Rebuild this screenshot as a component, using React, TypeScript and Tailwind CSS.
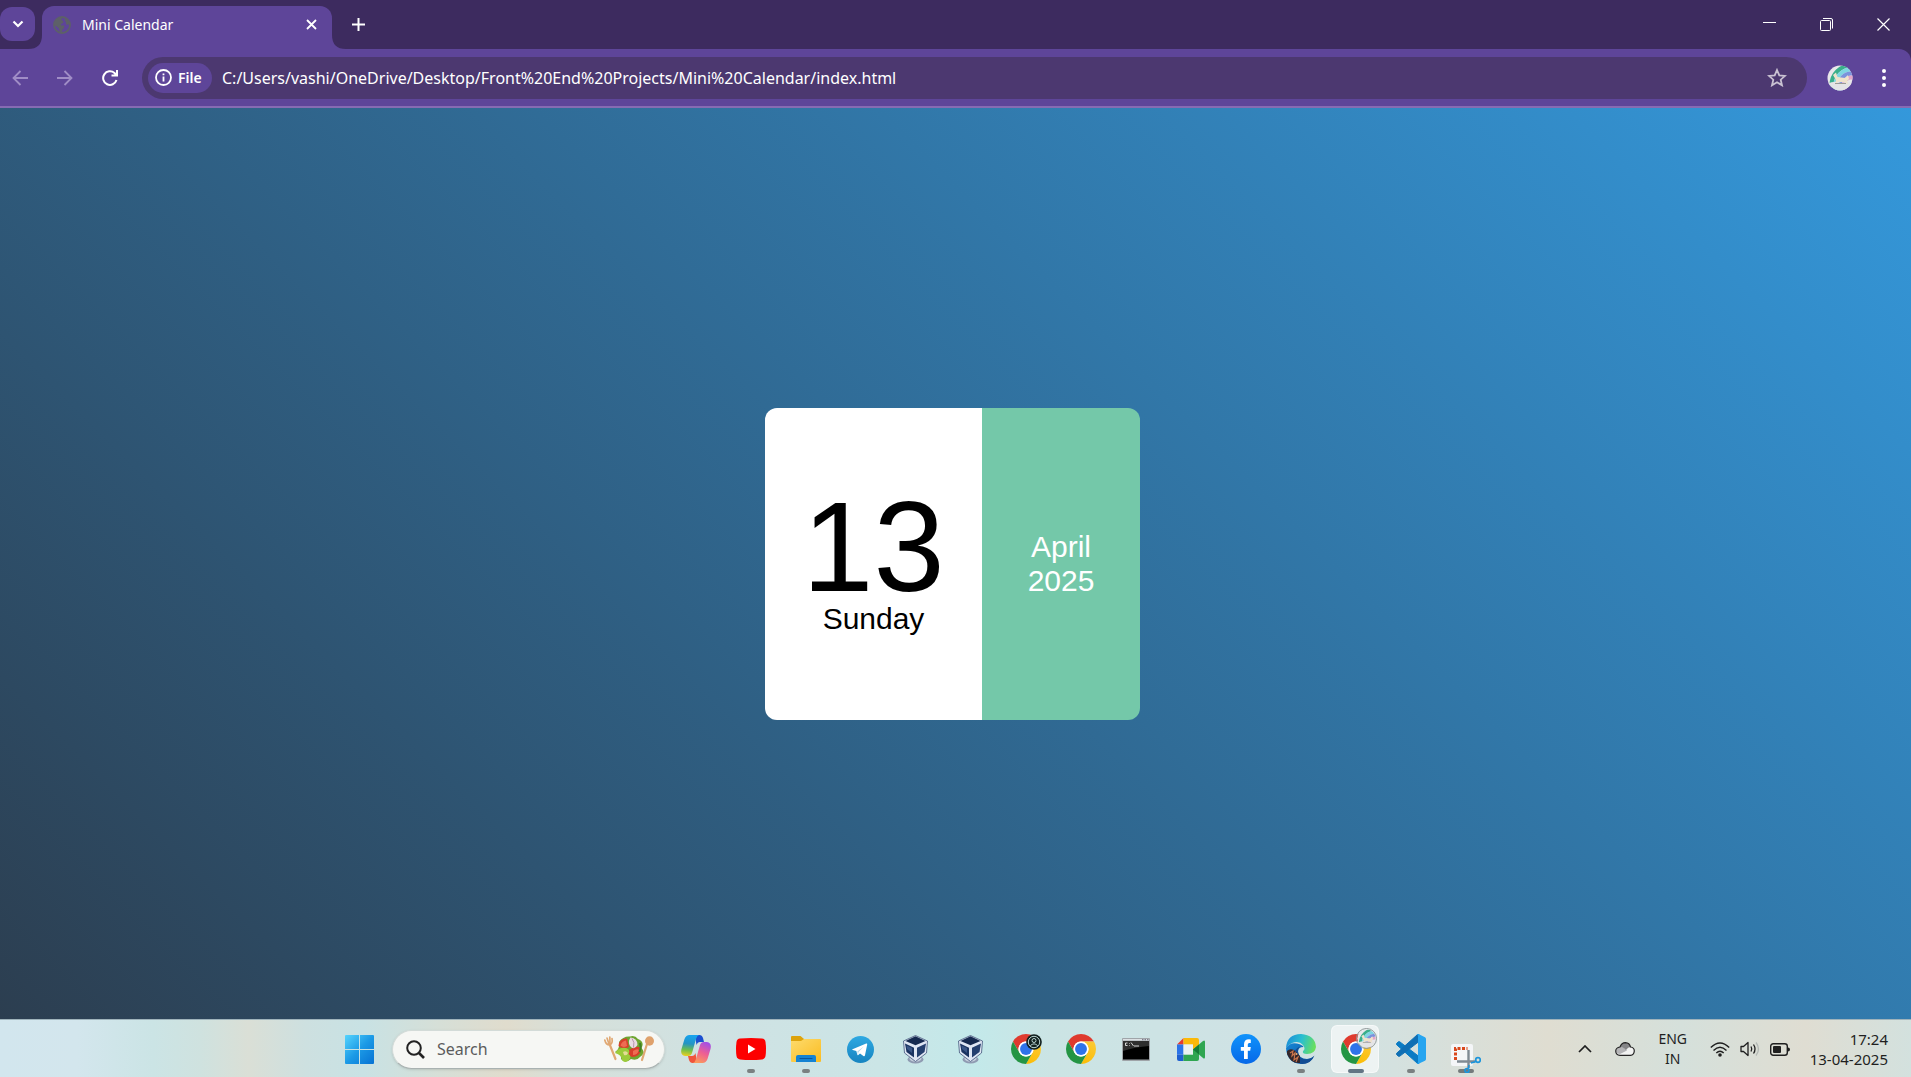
import type { ReactNode } from "react";

function Chrome({ id }: { id: string }) {
  const seg = "M4.95 13A22 22 0 0 1 43.05 13H24A11 11 0 0 0 14.47 29.5Z";
  return (
    <svg viewBox="2 2 44 44" className="size-[30px]" aria-hidden="true">
      <defs>
        <linearGradient id={`${id}-y`} x1="0" y1="0" x2="1" y2="0">
          <stop offset="0" stopColor="#fcc934" />
          <stop offset="1" stopColor="#fbbc04" />
        </linearGradient>
      </defs>
      <circle cx="24" cy="24" r="12" fill="#fff" />
      <path d={seg} fill="#df3a2e" />
      <path d={seg} fill={`url(#${id}-y)`} transform="rotate(120 24 24)" />
      <path d={seg} fill="#249544" transform="rotate(240 24 24)" />
      <circle cx="24" cy="24" r="11" fill="#fff" />
      <circle cx="24" cy="24" r="8.7" fill="#2f73ea" />
    </svg>
  );
}

function WindowsLogo() {
  return (
    <svg viewBox="0 0 29 29" className="size-[29px]" aria-hidden="true">
      <defs>
        <linearGradient id="win" gradientUnits="userSpaceOnUse" x1="0" y1="0" x2="29" y2="29">
          <stop offset="0" stopColor="#55d4fd" />
          <stop offset="0.5" stopColor="#1c9ae6" />
          <stop offset="1" stopColor="#0672d3" />
        </linearGradient>
      </defs>
      <path fill="url(#win)" d="M1 0h13v14H0V1a1 1 0 0 1 1-1ZM15 0h13a1 1 0 0 1 1 1v13H15ZM0 15h14v14H1a1 1 0 0 1-1-1ZM15 15h14v13a1 1 0 0 1-1 1H15Z" />
    </svg>
  );
}

function Salad() {
  return (
    <svg viewBox="0 0 52 28" className="h-7 w-[52px]" aria-hidden="true">
      <g stroke="#e0a873" strokeLinecap="round" fill="none">
        <path d="M6.500 9L12.500 24" strokeWidth="2.200" />
        <path d="M1.800 5Q3 10 6.500 10Q10 9 9 3.500M4 3L6 9M6.800 2L7 8" strokeWidth="1.700" />
        <path d="M44 9L39 25" strokeWidth="2.200" />
      </g>
      <ellipse cx="46.500" cy="6" rx="4.500" ry="4.700" fill="#dfa16c" />
      <path d="M16 7Q20 1 27 1.500Q32 0 35 4Q42 7 38.500 13Q43 18 37 22Q34 26 28 24Q22 29 18 24Q19 19 12 17Q17 14 16 7Z" fill="#6da52f" />
      <path d="M15.500 11Q16 3 24 3.500L26 12Q20 15 15.500 11Z" fill="#d8402c" />
      <path d="M26 15Q36 9 38 14Q37 22 29 22Q23 20 26 15Z" fill="#d73d2b" />
      <path d="M17.500 10.500Q19 6 23 5.500L24 11Q20 13 17.500 10.500ZM30 16Q35 13 36 15.500Q34 20 30 20Z" fill="#ee6d52" />
      <path d="M27.500 2.500Q34.500 3 34.500 10Q31 16 27 11Q24.500 7 27.500 2.500Z" fill="#eadbe2" />
      <path d="M29 3.500Q32 7 30.500 12.500" stroke="#a9829c" strokeWidth=".8" fill="none" />
      <path d="M12 18Q16 12 23 13Q28 15 25.500 19Q29 21 26 25Q22 29 19 25Q19 20 12 18Z" fill="#9ccb3b" />
      <path d="M20 17Q23 15 25 18Q24 21 21 20Z" fill="#e4dc96" />
      <path d="M37 8Q38.500 13 36.500 17" stroke="#3f7f25" strokeWidth="2" fill="none" />
    </svg>
  );
}

function Copilot() {
  return (
    <svg viewBox="0 0 30 28" className="h-7 w-[30px]" aria-hidden="true">
      <defs>
        <linearGradient id="cp-a" x1="0.300" y1="0" x2="0.200" y2="1">
          <stop offset="0" stopColor="#16a3ee" />
          <stop offset="0.400" stopColor="#2494c4" />
          <stop offset="0.700" stopColor="#6fbf4b" />
          <stop offset="1" stopColor="#f0cf20" />
        </linearGradient>
        <linearGradient id="cp-b" x1="0.700" y1="0" x2="0.300" y2="1">
          <stop offset="0" stopColor="#a34fe6" />
          <stop offset="0.500" stopColor="#ee5f93" />
          <stop offset="1" stopColor="#fb9a5c" />
        </linearGradient>
      </defs>
      <path d="M14 0H18.500Q21 0 22 3L23 7H19Q16.500 7 15.500 10Z" fill="#1b4fd0" />
      <path d="M16 28H11.500Q9 28 8 25L7 21H11Q13.500 21 14.500 18Z" fill="#f0553c" />
      <path d="M8.500 0H18Q16 .5 15 4L11 18Q10 21 7 21H4Q-1 20 .5 14L3.500 4Q5 0 8.500 0Z" fill="url(#cp-a)" />
      <path d="M21.500 28H12Q14 27.500 15 24L19 10Q20 7 23 7H26Q31 8 29.500 14L26.500 24Q25 28 21.500 28Z" fill="url(#cp-b)" />
    </svg>
  );
}

function YouTube() {
  return (
    <svg viewBox="0 0 30 22" className="h-[22px] w-[30px]" aria-hidden="true">
      <path d="M4 .6Q15-.6 26 .6Q29 1 29.500 4Q30.500 11 29.500 18Q29 21 26 21.400Q15 22.600 4 21.400Q1 21 .5 18Q-.5 11 .5 4Q1 1 4 .6Z" fill="#fd0000" />
      <path d="M12 6.500L19.500 11L12 15.500Z" fill="#fff" />
    </svg>
  );
}

function Folder() {
  return (
    <svg viewBox="0 0 30 26" className="h-[26px] w-[30px]" aria-hidden="true">
      <defs>
        <linearGradient id="fold" x1="0" y1="0" x2="1" y2="1">
          <stop offset="0" stopColor="#fddb6d" />
          <stop offset="1" stopColor="#fbbc21" />
        </linearGradient>
      </defs>
      <path d="M0 1Q0 0 1 0H9.500L13 3V5H0Z" fill="#dda30c" />
      <path d="M0 5H10L13 3H29Q30 3 30 4V25Q30 26 29 26H1Q0 26 0 25Z" fill="url(#fold)" />
      <path d="M5 26V21Q5 19 7 19H23Q25 19 25 21V26Z" fill="#1583d3" />
      <path d="M9 22.500H21" stroke="#0b569e" strokeWidth="1.200" strokeLinecap="round" />
    </svg>
  );
}

function Telegram() {
  return (
    <svg viewBox="0 0 27 27" className="size-[27px]" aria-hidden="true">
      <defs>
        <linearGradient id="tg" x1="0" y1="0" x2="0" y2="1">
          <stop offset="0" stopColor="#2fa9e2" />
          <stop offset="1" stopColor="#1784c0" />
        </linearGradient>
      </defs>
      <circle cx="13.500" cy="13.500" r="13.500" fill="url(#tg)" />
      <path d="M5.500 13.200L19.200 7.600Q20.400 7.300 20.200 8.600L18 19.300Q17.600 20.600 16.400 19.900L13 17.400L11.300 19.100Q10.500 19.700 10.300 18.600L9.300 15L5.700 14.100Q4.700 13.700 5.500 13.200Z" fill="#fff" />
      <path d="M10.300 15.400L17 10.300L11.600 16.100L10.900 18.800Z" fill="#b5d8ea" />
    </svg>
  );
}

function VirtualBox() {
  return (
    <svg viewBox="0 0 25 29" className="h-[29px] w-[25px]" aria-hidden="true">
      <ellipse cx="12.500" cy="24.500" rx="8" ry="4" fill="#8f9bb2" />
      <ellipse cx="12.500" cy="23.500" rx="6" ry="3.200" fill="#c5cfdd" />
      <path d="M12.500 .5L24.500 6L23.500 18L12.500 26.500L1.500 18L.5 6Z" fill="#dfe6f3" stroke="#44577c" strokeWidth=".8" />
      <path d="M12.500 1.300L22.500 6L12.500 10.300L2.500 6Z" fill="#15294f" />
      <path d="M2 8.500L11 12.700V22.500L3.500 17Z" fill="#1a3360" />
      <path d="M23 8.500L14 12.700V22.500L21.500 17Z" fill="#243f6e" />
      <path d="M3.500 10.500L9 13V18L4 14Z" fill="#3a5687" />
    </svg>
  );
}

function Terminal() {
  return (
    <svg viewBox="0 0 28 23" className="h-[23px] w-7" aria-hidden="true">
      <rect width="28" height="23" rx="1" fill="#9fa4a8" />
      <rect x="1" y="1" width="26" height="1.500" fill="#dce0e3" />
      <path d="M20 1.700h1.500m1 0h1.500m1 0h1.500" stroke="#667" strokeWidth="1" />
      <rect x="1" y="3" width="26" height="18.500" fill="#000" />
      <path d="M1 3H27V8Q13 9 1 13Z" fill="#2e2e2e" />
      <path d="M5.500 5H3.500V7.500H5.500M7.500 5v.6M7.500 7v.6M9 4.500L11.500 8M12 8H17" stroke="#e8e8e8" strokeWidth=".9" fill="none" />
    </svg>
  );
}

function Meet() {
  return (
    <svg viewBox="0 0 28 23" className="h-[23px] w-7" aria-hidden="true">
      <path d="M0 6.500L6.500 0V6.500Z" fill="#e5392f" />
      <path d="M0 6.500H6.500V16.500H0Z" fill="#2b73e8" />
      <path d="M0 16.500H6.500V23H2Q0 23 0 21Z" fill="#1d5fd0" />
      <path d="M6.500 0H20Q22 0 22 2V9L16 12V6.500H6.500Z" fill="#fbb908" />
      <path d="M6.500 16.500H16V11.500L22 8V21Q22 23 20 23H6.500Z" fill="#2fa651" />
      <path d="M6.500 6.500H16V16.500H6.500Z" fill="#eaf1f1" />
      <path d="M16 11.500L26 3Q28 1.500 28 4V19Q28 21.500 26 20Z" fill="#2fa651" />
      <path d="M16 11.500L22 6.500V16.500Z" fill="#157a38" />
    </svg>
  );
}

function Facebook() {
  return (
    <svg viewBox="0 0 30 30" className="size-[30px]" aria-hidden="true">
      <defs>
        <linearGradient id="fb" x1="0" y1="0" x2="0" y2="1">
          <stop offset="0" stopColor="#1093fb" />
          <stop offset="1" stopColor="#0668e8" />
        </linearGradient>
      </defs>
      <circle cx="15" cy="15" r="15" fill="url(#fb)" />
      <path d="M13 25V16.800H9.800V12.900H13V10.500Q13 5.300 18 5.300Q19 5.300 19.800 5.500V8.900H18.300Q16.800 8.900 16.800 10.600V12.900H19.800L19.200 16.800H16.800V25Z" fill="#fff" />
    </svg>
  );
}

function Edge() {
  return (
    <svg viewBox="0 0 30 30" className="size-[30px]" aria-hidden="true">
      <defs>
        <linearGradient id="ed-a" x1="0" y1="0.300" x2="1" y2="0.500">
          <stop offset="0" stopColor="#1c8fd8" />
          <stop offset="0.500" stopColor="#29bfd0" />
          <stop offset="1" stopColor="#6be05a" />
        </linearGradient>
        <linearGradient id="ed-b" x1="0" y1="0" x2="1" y2="1">
          <stop offset="0" stopColor="#1687d6" />
          <stop offset="1" stopColor="#0b4f9e" />
        </linearGradient>
      </defs>
      <path d="M0 14Q1 0 15 0Q29 1 30 13Q29 20 21 20Q16 20 17 17Q20 15 17 11Q13 6 6 9Q2 11 0 14Z" fill="url(#ed-a)" />
      <path d="M0 14Q4 8 11 9.500Q17 11 17.500 13Q12 13 12 18Q13 25 21 25Q25 25 28 22Q24 30 15 30Q1 29 0 14Z" fill="url(#ed-b)" />
      <path d="M12 17Q12 25 20 25.500Q25 25.500 28.500 21.500Q25 30 16 30Q8 28 8 21Q8 15 14 12.500Q12 14.500 12 17Z" fill="#134d94" />
      <path d="M1 17Q4 14 8 16L14 22V29Q5 30 1 20Z" fill="#33272b" />
      <path d="M4 19L7 17L6 22L9 19L8 26L12 23L10 28" stroke="#c9744b" strokeWidth="1.200" fill="none" />
      <circle cx="10.500" cy="20" r="1" fill="#e6b07c" />
    </svg>
  );
}

function VSCode() {
  return (
    <svg viewBox="0 0 30 30" className="size-[30px]" aria-hidden="true">
      <path d="M.7 9.300L2.200 7.900Q3 7.300 3.900 7.900L23 22.500V29.300Q22 29.800 21 29L.7 10.800Q0 10 .7 9.300Z" fill="#0a7bc4" stroke="#0a7bc4" />
      <path d="M.7 20.700L2.200 22.100Q3 22.700 3.900 22.100L23 7.500V.7Q22 .2 21 1L.7 19.200Q0 20 .7 20.700Z" fill="#0f6fb4" stroke="#0f6fb4" />
      <path d="M22 30Q21 30 20.500 29Q22 29.500 22 28V2Q22 .5 20.500 1Q21 0 22.500 0L29 3.300Q30 3.800 30 5V25Q30 26.200 29 26.700Z" fill="#27a5f0" />
    </svg>
  );
}

function SnippingTool() {
  return (
    <svg viewBox="0 0 30 30" className="size-[30px]" aria-hidden="true">
      <rect x="0" y="1" width="22" height="22" rx="2" fill="#f4f6f8" />
      <path d="M4.500 17V5.500H16.500" stroke="#d9481c" strokeWidth="3" strokeDasharray="3 1.500" fill="none" />
      <path d="M17.500 7V25M6 18.500H24" stroke="#7f8a93" strokeWidth="2.400" />
      <circle cx="27" cy="17" r="2.300" stroke="#1c95dc" strokeWidth="1.700" fill="none" />
      <circle cx="16" cy="27.500" r="2" stroke="#1c95dc" strokeWidth="1.700" fill="none" />
      <path d="M20 20L25 18.500M18 22L17.500 25.500" stroke="#1c95dc" strokeWidth="1.500" />
    </svg>
  );
}

function Avatar({ className, id }: { className: string; id: string }) {
  return (
    <svg viewBox="0 0 26 26" className={className} aria-hidden="true">
      <clipPath id={id}>
        <circle cx="13" cy="13" r="12.500" />
      </clipPath>
      <g clipPath={`url(#${id})`}>
        <rect width="26" height="26" fill="#e9e7ea" />
        <g fill="none" strokeWidth="4">
          <circle cx="24" cy="20" r="19.500" stroke="#3aaf8b" />
          <circle cx="24" cy="20" r="15.500" stroke="#7fd6e2" />
          <circle cx="24" cy="20" r="11.500" stroke="#7b93dc" />
          <circle cx="24" cy="20" r="7.500" stroke="#e3a5c8" />
        </g>
        <path d="M0 19Q8 15 14 18Q22 16 26 18V26H0Z" fill="#e4e4e6" />
        <path d="M6 10L9 7.500L10.500 12L18 13L21 10L22 14L20 16L21 19L17 17L11 17L8 20L9 15Z" fill="#efe3cb" />
        <path d="M8 18.500H19" stroke="#9b9b98" strokeWidth="1" />
      </g>
    </svg>
  );
}

function TaskButton({ label, children, mark, active }: { label: string; children: ReactNode; mark?: "short" | "wide"; active?: boolean }) {
  return (
    <button type="button" aria-label={label} className="relative flex h-12 w-[55px] items-center justify-center">
      {active && <span className="absolute inset-y-0 left-[3px] w-12 rounded-md border border-white/50 bg-white/60" />}
      <span className="relative">{children}</span>
      {mark === "short" && <span className="absolute bottom-0 h-1 w-2 rounded-full bg-[#7a8081]" />}
      {mark === "wide" && <span className="absolute bottom-0 h-1 w-4 rounded-full bg-[#627584]" />}
    </button>
  );
}

function TitleBar() {
  return (
    <header className="flex h-[49px] items-start bg-[#3d2b5f] text-white">
      <button type="button" aria-label="Search tabs" className="mt-[7px] flex h-[34px] w-[35px] items-center justify-center rounded-xl bg-[#5e4599]">
        <svg viewBox="0 0 12 8" className="h-2 w-3" fill="none" stroke="currentColor" strokeWidth="2.200" aria-hidden="true">
          <path d="M1.500 1.500L6 6L10.500 1.500" />
        </svg>
      </button>
      <div className="relative mt-[6px] ml-[7px] flex h-[43px] w-[290px] items-center rounded-t-xl bg-[#5e4599] pr-[15px] pb-[6px] pl-[11px]">
        <svg viewBox="0 0 14 14" className="absolute bottom-0 -left-[14px] size-[14px]" aria-hidden="true">
          <path d="M14 0V14H0Q14 14 14 0Z" fill="#5e4599" />
        </svg>
        <svg viewBox="0 0 14 14" className="absolute -right-[14px] bottom-0 size-[14px]" aria-hidden="true">
          <path d="M0 0V14H14Q0 14 0 0Z" fill="#5e4599" />
        </svg>
        <svg viewBox="0 0 18 18" className="size-[18px]" aria-hidden="true">
          <circle cx="9" cy="9" r="8" fill="none" stroke="#5d6068" strokeWidth="1.800" />
          <path d="M2 5Q5 0 10 1.500Q7.500 3 9 4.500Q11 5 10 7Q7 8 8 9.500H11Q12 11 10.500 12.500Q9 13 9 16.500Q6 16 6 13Q5.500 11 1.500 9.500ZM12 2Q15.500 4 16.500 8Q14 9.500 13 8Q13.500 6 12 5Z" fill="#5d6068" />
        </svg>
        <span className="ml-[11px] flex-1 text-[14px] leading-5">Mini Calendar</span>
        <button type="button" aria-label="Close tab" className="flex size-[11px] items-center justify-center">
          <svg viewBox="0 0 11 11" className="size-[11px]" stroke="currentColor" strokeWidth="1.800" aria-hidden="true">
            <path d="M1 1L10 10M10 1L1 10" />
          </svg>
        </button>
      </div>
      <button type="button" aria-label="New tab" className="ml-[12px] flex h-12 w-7 items-center justify-center">
        <svg viewBox="0 0 13 13" className="size-[13px]" stroke="currentColor" strokeWidth="2" aria-hidden="true">
          <path d="M6.500 0V13M0 6.500H13" />
        </svg>
      </button>
      <div className="ml-auto flex h-12 items-center">
        <button type="button" aria-label="Minimize" className="flex h-12 w-14 items-center justify-center">
          <svg viewBox="0 0 13 13" className="size-[13px]" stroke="currentColor" aria-hidden="true">
            <path d="M0 4.500H13" />
          </svg>
        </button>
        <button type="button" aria-label="Restore" className="flex h-12 w-[58px] items-center justify-center">
          <svg viewBox="0 0 13 13" className="size-[13px]" fill="none" stroke="currentColor" aria-hidden="true">
            <rect x=".5" y="2.500" width="10" height="10" rx="1" />
            <path d="M3 .5H11Q12.500 .5 12.500 2V10.500" />
          </svg>
        </button>
        <button type="button" aria-label="Close" className="flex h-12 w-14 items-center justify-center">
          <svg viewBox="0 0 13 13" className="size-[13px]" stroke="currentColor" strokeWidth="1.200" aria-hidden="true">
            <path d="M.5 .5L12.500 12.500M12.500 .5L.5 12.500" />
          </svg>
        </button>
      </div>
    </header>
  );
}

function Toolbar() {
  return (
    <div className="bg-[#3d2b5f]">
      <div className="flex h-[59px] items-center rounded-tr-xl border-b-2 border-[#866bb3] bg-[#5e4599] text-white">
        <div className="flex gap-[5px]">
          <button type="button" aria-label="Back" className="flex h-8 w-10 items-center justify-center text-[#a08dc6]">
            <svg viewBox="0 0 16 16" className="size-4" fill="none" stroke="currentColor" strokeWidth="1.800" aria-hidden="true">
              <path d="M16 8H1.500M8.500 1L1.500 8L8.500 15" />
            </svg>
          </button>
          <button type="button" aria-label="Forward" className="flex h-8 w-10 items-center justify-center text-[#a08dc6]">
            <svg viewBox="0 0 16 16" className="size-4" fill="none" stroke="currentColor" strokeWidth="1.800" aria-hidden="true">
              <path d="M0 8H14.500M7.500 1L14.500 8L7.500 15" />
            </svg>
          </button>
          <button type="button" aria-label="Reload" className="flex h-8 w-10 items-center justify-center">
            <svg viewBox="0 0 16 16" className="size-4" fill="none" stroke="currentColor" strokeWidth="2" aria-hidden="true">
              <path d="M14.500 10A6.800 6.800 0 1 1 12.500 3L14.500 5M15 0V5.500H9.500" />
            </svg>
          </button>
        </div>
        <div className="ml-3 flex h-[42px] flex-1 items-center rounded-full bg-[#4c3870] pr-[20px] pl-[6px]">
          <button type="button" className="flex h-[30px] w-16 items-center gap-[6px] rounded-full bg-[#5e4599] pl-[7px]">
            <svg viewBox="0 0 17 17" className="size-[17px]" fill="none" stroke="currentColor" strokeWidth="1.800" aria-hidden="true">
              <circle cx="8.500" cy="8.500" r="7.500" />
              <path d="M8.500 7.500V12.500M8.500 4.500V6.300" />
            </svg>
            <span className="text-[14px] font-semibold">File</span>
          </button>
          <input
            type="text"
            aria-label="Address"
            defaultValue="C:/Users/vashi/OneDrive/Desktop/Front%20End%20Projects/Mini%20Calendar/index.html"
            className="ml-[10px] min-w-0 flex-1 bg-transparent pt-px text-[16px] outline-none"
          />
          <button type="button" aria-label="Bookmark this tab" className="text-[#c9c2d2]">
            <svg viewBox="0 0 20 19" className="h-[19px] w-5" fill="none" stroke="currentColor" strokeWidth="1.800" aria-hidden="true">
              <path d="M10 2L12.300 7.400L18 7.900L13.700 11.700L15 17.300L10 14.300L5 17.300L6.300 11.700L2 7.900L7.700 7.400Z" />
            </svg>
          </button>
        </div>
        <button type="button" aria-label="Profile" className="ml-5">
          <Avatar id="profile" className="size-[26px]" />
        </button>
        <button type="button" aria-label="Menu" className="mr-[18px] ml-[22px] flex w-[18px] justify-center">
          <svg viewBox="0 0 4 18" className="h-[18px] w-1" fill="currentColor" aria-hidden="true">
            <circle cx="2" cy="2" r="2" />
            <circle cx="2" cy="9" r="2" />
            <circle cx="2" cy="16" r="2" />
          </svg>
        </button>
      </div>
    </div>
  );
}

function Calendar() {
  return (
    <main className="flex flex-1 items-center justify-center bg-[linear-gradient(45deg,#2c3e50,#3498db)] pr-[6px] font-['Liberation_Sans',Arial,sans-serif]">
      <section className="flex h-[312px] overflow-hidden rounded-xl text-[30px] leading-[34px]">
        <div className="flex w-[217px] flex-col items-center justify-center bg-white text-black">
          <p className="text-[128px] leading-[110px]">13</p>
          <p>Sunday</p>
        </div>
        <div className="flex w-[158px] flex-col items-center justify-center bg-[#74c8a9] text-white">
          <p>April</p>
          <p>2025</p>
        </div>
      </section>
    </main>
  );
}

function Taskbar() {
  return (
    <footer className="flex h-[58px] items-center border-t border-[#9fb3bb] bg-[linear-gradient(90deg,#d2e6ee_0%,#d3e6ed_4%,#cbe4e5_8%,#cfe2df_10.500%,#dadfd6_13%,#cde0e0_16%,#c8e2e4_19%,#d6dfd7_23%,#e0dccd_26.500%,#d6e0da_30%,#cfe2e3_38%,#cbe5e6_46%,#c3e9ea_51%,#cbe4e4_55%,#cfe2e4_66%,#d4e1df_73%,#dfddd1_81%,#d5e0db_88%,#dfddd2_94.500%,#d3e1de_100%)] pt-px text-[#1f1f1f]">
      <nav aria-label="Taskbar" className="ml-[332px] flex items-center">
        <TaskButton label="Start"><WindowsLogo /></TaskButton>
        <label className="mr-[3px] ml-[5px] flex h-[39px] w-[273px] items-center rounded-full border border-b-[#a9b2b1] border-[#d3dbd8] bg-[#f6f7f4] pr-[9px] pl-[13px] shadow-sm">
          <svg viewBox="0 0 19 19" className="size-[19px] shrink-0" fill="none" stroke="#222" strokeWidth="2" aria-hidden="true">
            <circle cx="8" cy="8" r="6.800" />
            <path d="M13 13L18 18" strokeWidth="2.600" />
          </svg>
          <input type="text" aria-label="Search" placeholder="Search" className="ml-3 min-w-0 flex-1 bg-transparent text-[16px] outline-none placeholder:text-[#5c5c5c]" />
          <Salad />
        </label>
        <TaskButton label="Copilot"><Copilot /></TaskButton>
        <TaskButton label="YouTube" mark="short"><YouTube /></TaskButton>
        <TaskButton label="File Explorer" mark="short"><Folder /></TaskButton>
        <TaskButton label="Telegram"><Telegram /></TaskButton>
        <TaskButton label="VirtualBox"><VirtualBox /></TaskButton>
        <TaskButton label="VirtualBox Manager"><VirtualBox /></TaskButton>
        <TaskButton label="Chrome profile">
          <Chrome id="c1" />
          <svg viewBox="0 0 16 16" className="absolute top-0 left-[15px] size-4" fill="none" stroke="#b9d3d1" aria-hidden="true">
            <circle cx="8" cy="8" r="7.800" fill="#12201f" stroke="none" />
            <circle cx="8" cy="8" r="5.700" />
            <circle cx="8" cy="6.500" r="2" />
            <path d="M4.300 11.700Q8 8 11.700 11.700" />
          </svg>
        </TaskButton>
        <TaskButton label="Chrome"><Chrome id="c2" /></TaskButton>
        <TaskButton label="Command Prompt"><Terminal /></TaskButton>
        <TaskButton label="Meet"><Meet /></TaskButton>
        <TaskButton label="Facebook"><Facebook /></TaskButton>
        <TaskButton label="Edge" mark="short"><Edge /></TaskButton>
        <TaskButton label="Chrome, Mini Calendar" mark="wide" active>
          <Chrome id="c3" />
          <Avatar id="badge" className="absolute -top-[6px] left-[15px] size-[21px] rounded-full border border-[#8e9696]" />
        </TaskButton>
        <TaskButton label="Visual Studio Code" mark="short"><VSCode /></TaskButton>
        <button type="button" aria-label="Snipping Tool" className="relative flex h-12 w-[55px] items-end justify-center">
          <span className="absolute bottom-0 h-1 w-4 rounded-full bg-[#747a7b]" />
          <span className="relative"><SnippingTool /></span>
        </button>
      </nav>
      <div className="ml-auto flex items-center pr-[23px] text-[14px] leading-5">
        <button type="button" aria-label="Hidden icons" className="flex w-10 justify-center">
          <svg viewBox="0 0 14 8" className="h-2 w-[14px]" fill="none" stroke="currentColor" strokeWidth="1.700" aria-hidden="true">
            <path d="M1 7L7 1L13 7" />
          </svg>
        </button>
        <button type="button" aria-label="OneDrive" className="flex w-10 justify-center">
          <svg viewBox="0 0 20 14" className="h-[14px] w-5" aria-hidden="true">
            <path d="M5 13.300Q.8 13 .7 9Q1 5.500 5 5Q6.500 .8 10.500 .7Q14.500 1 15.500 5Q19.300 5.500 19.300 9Q19 13 15.500 13.300Z" fill="#f2f3f2" />
            <path d="M1 9.500Q1 5.500 5 5Q9 5 12 8.500L5 12Q2 12 1 9.500Z" fill="#b4b4b6" />
            <path d="M4.500 5Q6.500 .8 10.500 .7Q14.500 1 15.500 5Q13 5 11 8Q8.500 5 4.500 5Z" fill="#858587" />
            <path d="M5 13.300Q.8 13 .7 9Q1 5.500 5 5Q6.500 .8 10.500 .7Q14.500 1 15.500 5Q19.300 5.500 19.300 9Q19 13 15.500 13.300Z" fill="none" stroke="#262626" strokeWidth="1.200" />
          </svg>
        </button>
        <button type="button" aria-label="Language" className="flex w-14 flex-col items-center">
          <span>ENG</span>
          <span>IN</span>
        </button>
        <button type="button" aria-label="Network, volume and battery" className="ml-[9px] flex items-center gap-[10px]">
          <svg viewBox="0 0 20 15" className="h-[15px] w-5" fill="none" stroke="currentColor" strokeWidth="1.400" aria-hidden="true">
            <path d="M.8 5.500Q10-3.500 19.200 5.500M3.500 8.500Q10 2 16.500 8.500M6.300 11Q10 7.500 13.700 11" />
            <circle cx="10" cy="13" r="1.800" fill="currentColor" stroke="none" />
          </svg>
          <svg viewBox="0 0 20 16" className="h-4 w-5" fill="none" stroke="currentColor" strokeWidth="1.300" aria-hidden="true">
            <path d="M1 5.500H3.500L8 1.500V14.500L3.500 10.500H1ZM11 5.500Q12.500 8 11 10.500M13.500 3.500Q16.500 8 13.500 12.500" strokeLinejoin="round" />
            <path d="M16 1.500Q21 8 16 14.500" stroke="#b4b9b5" />
          </svg>
          <svg viewBox="0 0 20 13" className="h-[13px] w-5" aria-hidden="true">
            <rect x=".7" y=".7" width="16.600" height="11.600" rx="2.500" fill="none" stroke="#1f1f1f" strokeWidth="1.400" />
            <rect x="3" y="3" width="8" height="7" rx="1" fill="#1f1f1f" />
            <path d="M18 4.500Q20 4.500 20 6.500Q20 8.500 18 8.500Z" fill="#1f1f1f" />
          </svg>
        </button>
        <button type="button" aria-label="Clock" className="ml-5 flex flex-col items-end text-[15px]">
          <time>17:24</time>
          <time>13-04-2025</time>
        </button>
      </div>
    </footer>
  );
}

export default function App() {
  return (
    <div className="flex min-h-screen flex-col font-['Noto_Sans',sans-serif]">
      <TitleBar />
      <Toolbar />
      <Calendar />
      <Taskbar />
    </div>
  );
}
